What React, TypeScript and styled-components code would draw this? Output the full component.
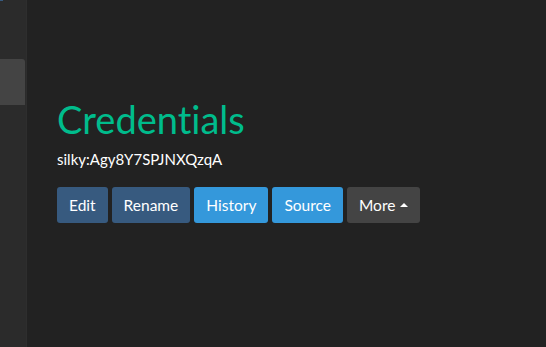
import React from "react";
import styled, { createGlobalStyle } from "styled-components";

const Global = createGlobalStyle`
  html, body { margin: 0; padding: 0; background: #222222; }
  body {
    font-family: Lato, "Open Sans", sans-serif;
    color: #ffffff;
    font-size: 15px;
    font-variant-ligatures: none;
  }
  #root { min-height: 347px; }
`;

const Page = styled.div`
  display: flex;
  height: 347px;
  overflow: hidden;
  background: #222222;
`;

const Sidebar = styled.aside`
  width: 26px;
  flex: none;
  background: #2b2b2b;
  border-right: 1px solid #2e2e2e;
  display: flex;
  flex-direction: column;
`;

const TopLink = styled.div`
  width: 3px;
  height: 1px;
  background: #375a7f;
`;

const NavItem = styled.div<{ $active?: boolean }>`
  margin-top: 58px;
  height: 46px;
  width: 25px;
  background: ${(p) => (p.$active ? "#444444" : "transparent")};
  border-top-right-radius: 3px;
`;

const Main = styled.main`
  flex: 1;
  padding: 96px 0 0 30px;
`;

const Title = styled.h1`
  margin: 0;
  font-family: Lato, sans-serif;
  font-weight: 400;
  font-size: 38px;
  line-height: 46px;
  color: #00bc8c;
  font-variant-ligatures: none;
`;

const Subtitle = styled.div`
  margin-top: 7px;
  font-size: 15px;
  line-height: 20px;
  color: #ffffff;
`;

const Toolbar = styled.div`
  display: flex;
  gap: 4px;
  margin-top: 18px;
`;

const tones = {
  primary: "#375a7f",
  info: "#3498db",
  secondary: "#444444",
};

const Button = styled.button<{ $tone: keyof typeof tones }>`
  height: 36px;
  padding: 0 12px;
  border: none;
  border-radius: 3px;
  background: ${(p) => tones[p.$tone]};
  color: #ffffff;
  font-family: Lato, sans-serif;
  font-size: 15.5px;
  line-height: 36px;
  display: inline-flex;
  align-items: center;
  gap: 5px;
  cursor: pointer;
`;

const Caret = styled.span`
  width: 0;
  height: 0;
  border-left: 4px solid transparent;
  border-right: 4px solid transparent;
  border-bottom: 4px solid #ffffff;
  margin-top: -1px;
`;

export default function App() {
  return (
    <Page>
      <Global />
      <Sidebar>
        <TopLink />
        <NavItem $active />
      </Sidebar>
      <Main>
        <Title>Credentials</Title>
        <Subtitle>silky:Agy8Y7SPJNXQzqA</Subtitle>
        <Toolbar>
          <Button $tone="primary">Edit</Button>
          <Button $tone="primary">Rename</Button>
          <Button $tone="info">History</Button>
          <Button $tone="info">Source</Button>
          <Button $tone="secondary">
            More
            <Caret />
          </Button>
        </Toolbar>
      </Main>
    </Page>
  );
}
